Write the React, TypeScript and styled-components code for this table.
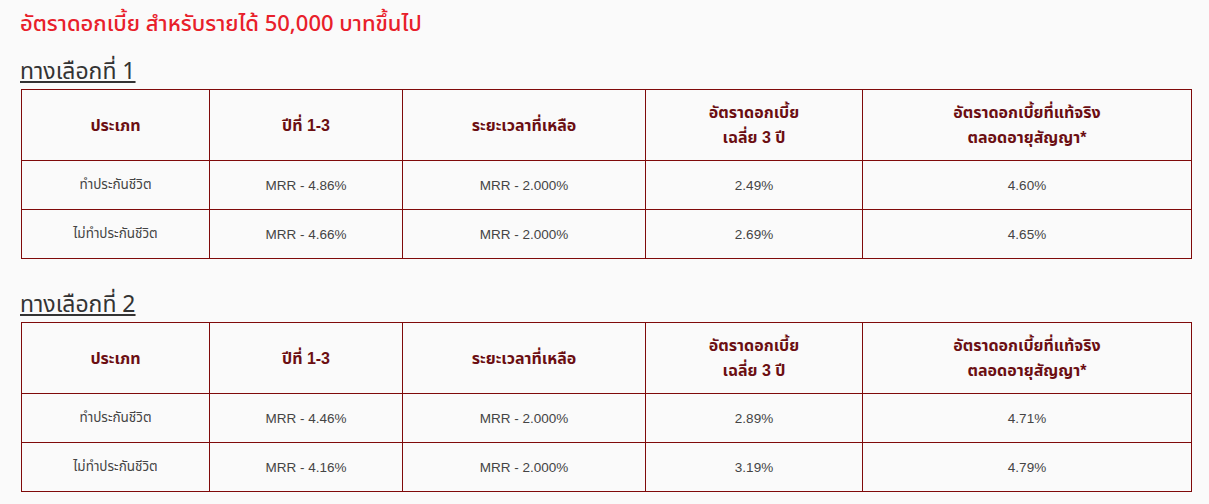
import styled, { createGlobalStyle } from 'styled-components'

const GlobalStyle = createGlobalStyle`
  html, body {
    margin: 0;
    padding: 0;
    background: #fafafa;
  }
  body {
    font-family: "Liberation Sans", "Noto Sans Thai", "Noto Sans", sans-serif;
  }
`

const Page = styled.div`
  padding: 9px 18px 0 20px;
`

const Title = styled.h1`
  margin: 0;
  font-size: 22px;
  font-weight: 500;
  line-height: 32px;
  color: #e8202a;
  font-family: "Noto Sans Thai", "Noto Sans", "Liberation Sans", sans-serif;
`

const Section = styled.section`
  margin-top: ${(p: { $first?: boolean }) => (p.$first ? '16px' : '31px')};
`

const Heading = styled.h2`
  margin: 0 0 2px;
  font-size: 23px;
  font-weight: 400;
  line-height: 30px;
  color: #333;
  font-family: "Noto Sans Thai", "Noto Sans", "Liberation Sans", sans-serif;
  text-decoration: underline;
  text-decoration-thickness: 2px;
  text-underline-offset: 2px;
`

const Table = styled.table`
  width: 1170px;
  border-collapse: collapse;
  table-layout: fixed;
  margin-left: 1px;
`

const Th = styled.th`
  height: 70px;
  border: 1px solid #7f0a0a;
  color: #6b0e12;
  font-size: 16px;
  font-weight: 700;
  line-height: 25px;
  text-align: center;
  vertical-align: middle;
  padding: 0 8px;
`

const Td = styled.td`
  height: 48px;
  border: 1px solid #7f0a0a;
  color: #444;
  font-size: 13.5px;
  text-align: center;
  vertical-align: middle;
  padding: 0 8px;
`

const widths = [188, 193, 243, 217, 329]

const headers = [
  ['ประเภท'],
  ['ปีที่ 1-3'],
  ['ระยะเวลาที่เหลือ'],
  ['อัตราดอกเบี้ย', 'เฉลี่ย 3 ปี'],
  ['อัตราดอกเบี้ยที่แท้จริง', 'ตลอดอายุสัญญา*'],
]

const options = [
  {
    name: 'ทางเลือกที่ 1',
    rows: [
      ['ทำประกันชีวิต', 'MRR - 4.86%', 'MRR - 2.000%', '2.49%', '4.60%'],
      ['ไม่ทำประกันชีวิต', 'MRR - 4.66%', 'MRR - 2.000%', '2.69%', '4.65%'],
    ],
  },
  {
    name: 'ทางเลือกที่ 2',
    rows: [
      ['ทำประกันชีวิต', 'MRR - 4.46%', 'MRR - 2.000%', '2.89%', '4.71%'],
      ['ไม่ทำประกันชีวิต', 'MRR - 4.16%', 'MRR - 2.000%', '3.19%', '4.79%'],
    ],
  },
]

export default function App() {
  return (
    <Page>
      <GlobalStyle />
      <Title>อัตราดอกเบี้ย สำหรับรายได้ 50,000 บาทขึ้นไป</Title>
      {options.map((opt, i) => (
        <Section key={opt.name} $first={i === 0}>
          <Heading>{opt.name}</Heading>
          <Table>
            <colgroup>
              {widths.map((w, j) => (
                <col key={j} style={{ width: w }} />
              ))}
            </colgroup>
            <thead>
              <tr>
                {headers.map((h, j) => (
                  <Th key={j}>
                    {h.map((line, k) => (
                      <div key={k}>{line}</div>
                    ))}
                  </Th>
                ))}
              </tr>
            </thead>
            <tbody>
              {opt.rows.map((r, j) => (
                <tr key={j}>
                  {r.map((c, k) => (
                    <Td key={k}>{c}</Td>
                  ))}
                </tr>
              ))}
            </tbody>
          </Table>
        </Section>
      ))}
    </Page>
  )
}
